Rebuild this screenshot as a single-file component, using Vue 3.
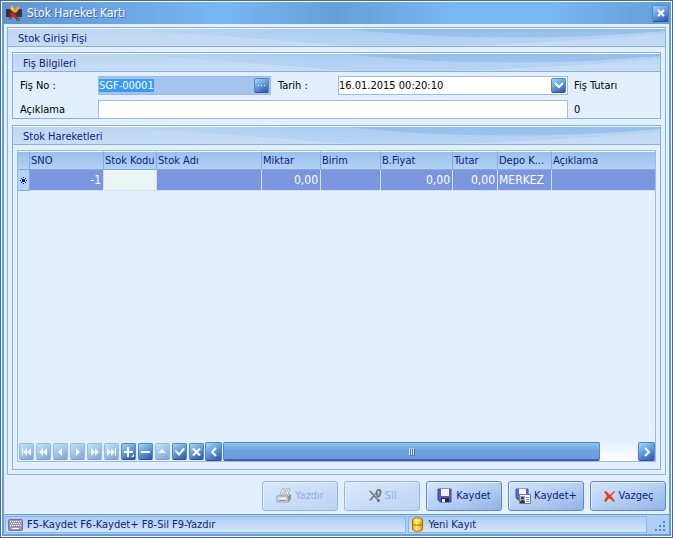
<script setup>
import { onMounted, ref } from 'vue'

const receiptNo = ref('SGF-00001')
const receiptDate = ref('16.01.2015 00:20:10')
const note = ref('')
const receiptInput = ref(null)

const columns = [
  { key: 'sno', title: 'SNO', width: 74, numeric: true },
  { key: 'code', title: 'Stok Kodu', width: 53 },
  { key: 'name', title: 'Stok Adı', width: 105 },
  { key: 'qty', title: 'Miktar', width: 59, numeric: true },
  { key: 'unit', title: 'Birim', width: 60 },
  { key: 'price', title: 'B.Fiyat', width: 72, numeric: true },
  { key: 'total', title: 'Tutar', width: 45, numeric: true },
  { key: 'store', title: 'Depo K...', width: 54 },
  { key: 'note', title: 'Açıklama' }
]

const rows = [
  { sno: '-1', code: '', name: '', qty: '0,00', unit: '', price: '0,00', total: '0,00', store: 'MERKEZ', note: '' }
]

const navButtons = [
  { label: 'İlk kayıt', off: true, d: 'M3 4h1v8H3zM8 4v8L4 8zM12 4v8L8 8z' },
  { label: 'Önceki sayfa', off: true, d: 'M7 4v8L3 8zM11 4v8L7 8z' },
  { label: 'Önceki', off: true, d: 'M9 4v8L5 8z' },
  { label: 'Sonraki', off: true, d: 'M6 4v8l4-4z' },
  { label: 'Sonraki sayfa', off: true, d: 'M4 4v8l4-4zM8 4v8l4-4z' },
  { label: 'Son kayıt', off: true, d: 'M3 4v8l4-4zM7 4v8l4-4zM11 4h1v8h-1z' },
  { label: 'Ekle', d: 'M6 3h2v4h4v2H8v4H6V9H3V7h3zM13 10v3h-3z' },
  { label: 'Çıkar', d: 'M3 7h9v2H3z' },
  { label: 'Düzenle', off: true, d: 'M3 9l4-4 4 4z' },
  { label: 'Onayla', d: 'M3 7l1-1 3 3 4-5 2 1-6 7z' },
  { label: 'İptal', d: 'M3 5l2-1 2.500 2.500L10 4l2 1-3 3 3 3-2 1-2.500-2.500L5 12l-2-1 3-3z' }
]

onMounted(() => {
  receiptInput.value.focus()
  receiptInput.value.select()
})
</script>

<template>
  <div class="window">
    <svg class="defs" aria-hidden="true">
      <defs>
        <linearGradient id="waveFill" x1="0" x2="1" y1="0" y2="0">
          <stop offset="0" stop-color="#bcd6f3" />
          <stop offset=".4" stop-color="#aaccf0" />
          <stop offset=".75" stop-color="#aaccf0" />
          <stop offset="1" stop-color="#b2d0f1" />
        </linearGradient>
        <linearGradient id="waveFade" x1="0" x2="0" y1="0" y2="1">
          <stop offset="0" stop-color="#c4dbf5" stop-opacity="0" />
          <stop offset="1" stop-color="#c4dbf5" stop-opacity=".6" />
        </linearGradient>
        <linearGradient id="waveDeep" x1="0" x2="0" y1="0" y2="1">
          <stop offset="0" stop-color="#93bdeb" />
          <stop offset="1" stop-color="#9fc5ee" />
        </linearGradient>
        <symbol id="wave" viewBox="0 0 658 18" preserveAspectRatio="none">
          <path d="M80 0C190 3 270 13 350 18H430C520 16 600 10 658 5V0z" fill="url(#waveFill)" />
          <path d="M80 0C190 3 270 13 350 18H430C520 16 600 10 658 5V0z" fill="url(#waveFade)" />
          <path d="M340 0C400 7 450 9 510 9S610 6 658 2V0z" fill="url(#waveDeep)" />
        </symbol>
        <linearGradient id="gold" x1="0" x2="1" y1="0" y2="0">
          <stop offset="0" stop-color="#f0a800" />
          <stop offset=".4" stop-color="#fff06a" />
          <stop offset="1" stop-color="#e89a00" />
        </linearGradient>
      </defs>
    </svg>

    <header class="titlebar">
      <svg class="app-icon" width="17" height="16" viewBox="0 0 17 16" aria-hidden="true">
        <path d="M0 4h5l3 3 3-3h5v8h-5l-2-2-3 2H0z" fill="#383538" />
        <path d="M4 1l2-1 3 5 3-4 2 2-4 5-3-1z" fill="#f3a62c" />
        <circle cx="6" cy="4" r="1.500" fill="#ffd34a" />
        <path d="M3 9l3-2 2 1 5 6-2 1-4-4-3 4-1-2 2-3z" fill="#c71f1b" />
        <path d="M10 13h1v3h-1zM12 13h2v1h-2zM12 15h2v1h-2z" fill="#475873" />
      </svg>
      <h1>Stok Hareket Kartı</h1>
      <button class="glossy close" type="button" aria-label="Kapat">
        <svg width="8" height="8" viewBox="0 0 8 8"><path d="M1 1l6 6M7 1L1 7" stroke="#fff" stroke-width="2" /></svg>
      </button>
    </header>

    <main class="body">
      <section class="panel outer">
        <h2 class="panel-head"><svg class="wave"><use href="#wave" /></svg><span>Stok Girişi Fişi</span></h2>
        <div class="outer-body">
          <section class="panel">
            <h3 class="panel-head"><svg class="wave"><use href="#wave" /></svg><span>Fiş Bilgileri</span></h3>
            <form class="form" @submit.prevent>
              <label for="no">Fiş No :</label>
              <div class="field active">
                <input id="no" ref="receiptInput" v-model="receiptNo" type="text" />
                <button class="glossy small" type="button" aria-label="Fiş seç">
                  <svg width="8" height="2" viewBox="0 0 8 2"><path d="M0 0h1v1H0zM3 0h1v1H3zM6 0h1v1H6z" fill="#fff" /></svg>
                </button>
              </div>
              <label for="date">Tarih :</label>
              <div class="field">
                <input id="date" v-model="receiptDate" type="text" />
                <button class="glossy small" type="button" aria-label="Takvimi aç">
                  <svg width="10" height="7" viewBox="0 0 10 7"><path d="M1 1l4 4 4-4" fill="none" stroke="#fff" stroke-width="2" /></svg>
                </button>
              </div>
              <span class="total">Fiş Tutarı</span>
              <label for="note">Açıklama</label>
              <div class="field wide"><input id="note" v-model="note" type="text" /></div>
              <output class="total">0</output>
            </form>
          </section>

          <section class="panel lines">
            <h3 class="panel-head"><svg class="wave"><use href="#wave" /></svg><span>Stok Hareketleri</span></h3>
            <div class="grid">
              <table>
                <colgroup>
                  <col width="12" />
                  <col v-for="c in columns" :key="c.key" :width="c.width" />
                </colgroup>
                <thead>
                  <tr>
                    <th></th>
                    <th v-for="c in columns" :key="c.key" scope="col">{{ c.title }}</th>
                  </tr>
                </thead>
                <tbody>
                  <tr v-for="r in rows" :key="r.sno">
                    <td class="marker">
                      <svg width="7" height="7" viewBox="0 0 7 7"><path d="M3 0h1v1H3zM1 1h1v1H1zM5 1h1v1H5zM2 2h1v1H2zM4 2h1v1H4zM0 3h1v1H0zM2 3h3v1H2zM6 3h1v1H6zM3 2h1v3H3zM2 4h1v1H2zM4 4h1v1H4zM1 5h1v1H1zM5 5h1v1H5zM3 6h1v1H3z" fill="#10207e" /></svg>
                    </td>
                    <td v-for="c in columns" :key="c.key" :class="{ numeric: c.numeric, editing: c.key === 'code' }">{{ r[c.key] }}</td>
                  </tr>
                </tbody>
              </table>
              <div class="navigator">
                <button v-for="b in navButtons" :key="b.label" class="glossy nav" type="button" :disabled="b.off" :aria-label="b.label">
                  <svg width="15" height="16" viewBox="0 0 15 16"><path :d="b.d" fill="#fff" /></svg>
                </button>
                <button class="glossy arrow" type="button" aria-label="Sola kaydır">
                  <svg width="8" height="10" viewBox="0 0 8 10"><path d="M6 1L2 5l4 4" fill="none" stroke="#fff" stroke-width="2" /></svg>
                </button>
                <div class="track">
                  <div class="thumb"><i></i><i></i><i></i></div>
                </div>
                <button class="glossy arrow" type="button" aria-label="Sağa kaydır">
                  <svg width="8" height="10" viewBox="0 0 8 10"><path d="M2 1l4 4-4 4" fill="none" stroke="#fff" stroke-width="2" /></svg>
                </button>
              </div>
            </div>
          </section>
        </div>
      </section>

      <div class="actions">
        <button class="action" type="button" disabled>
          <svg width="16" height="16" viewBox="0 0 16 16">
            <path d="M6 1h8l-2 6H4z" fill="#f2f3f5" stroke="#a9adb4" />
            <path d="M7 3h5M6 5h5" stroke="#a5aab2" />
            <path d="M12 8l3-2v5l-3 4z" fill="#8b9097" />
            <path d="M1 8l3-2h11l-3 2z" fill="#bfc3c8" />
            <path d="M1 8h11v6H1z" fill="#d3d6da" stroke="#9a9fa6" />
            <path d="M3 10h7v1H3z" fill="#f7f8f9" />
            <path d="M3 12h7v1H3z" fill="#8b9097" />
          </svg>
          <span>Yazdır</span>
        </button>
        <button class="action" type="button" disabled>
          <svg width="14" height="14" viewBox="0 0 14 14">
            <path d="M1 2l2 0 7 8-1 1z" fill="#6b7078" />
            <path d="M8 3l1 1-6 8-2-1z" fill="#80858d" />
            <path d="M9 1c1-1 4-1 4 1 0 3-1 5-2 6H9c0-2-1-5 0-7z" fill="#8a9098" stroke="#666c75" />
            <path d="M10 2h1v3h-1z" fill="#d5d8dc" />
            <circle cx="10.500" cy="11.500" r="1.500" fill="#666c75" />
          </svg>
          <span>Sil</span>
        </button>
        <button class="action" type="button">
          <svg width="16" height="16" viewBox="0 0 16 16">
            <path d="M1 1h13v13H3l-2-2z" fill="#5b5abb" stroke="#45449c" />
            <path d="M4 1h8v7H4z" fill="#f2f4ff" />
            <path d="M4 10h8v4H4z" fill="#25253e" />
            <path d="M5 11h3v3H5z" fill="#e8eaf4" />
          </svg>
          <span>Kaydet</span>
        </button>
        <button class="action" type="button">
          <svg width="16" height="16" viewBox="0 0 16 16">
            <path d="M1 1h12v11H3l-2-2z" fill="#6766c4" stroke="#5453ae" />
            <path d="M4 1h7v5H4z" fill="#f2f4ff" />
            <path d="M4.500 6.500h11v9h-11z" fill="#f8fafc" stroke="#6d7e91" />
            <path d="M5 8h5v7H5z" fill="#a9bccb" />
            <circle cx="7.500" cy="10" r="1.500" fill="#30343c" />
            <path d="M5 15c0-4 5-4 5 0z" fill="#30343c" />
            <path d="M11 9.500h3M11 11.500h3M11 13.500h3" stroke="#6a95bd" />
          </svg>
          <span>Kaydet+</span>
        </button>
        <button class="action" type="button">
          <svg width="13" height="13" viewBox="0 0 13 13">
            <path d="M1 2l2-1 4 4 4-4 1 1-4 4 4 5-1 1-5-4-3 4-2-1 3-5z" fill="#f13a12" />
          </svg>
          <span>Vazgeç</span>
        </button>
      </div>
    </main>

    <footer class="status">
      <div class="cell keys">
        <svg width="15" height="12" viewBox="0 0 15 12">
          <rect x=".5" y=".5" width="14" height="11" rx="1" fill="#9b96bf" stroke="#716d9b" />
          <path d="M2 2.500h11M3 4.500h10M2 6.500h11" stroke="#fff" stroke-dasharray="1 1" />
          <path d="M4 9.500h7" stroke="#fff" />
        </svg>
        <span>F5-Kaydet F6-Kaydet+ F8-Sil F9-Yazdır</span>
      </div>
      <div class="cell state">
        <svg width="11" height="15" viewBox="0 0 11 15">
          <path d="M.5 3c0-3 10-3 10 0v9c0 3-10 3-10 0z" fill="url(#gold)" stroke="#a76d06" />
          <path d="M1 7.500c2 1 7 1 9 0" fill="none" stroke="#a76d06" />
          <path d="M2 3c2 1 5 1 7 0" fill="none" stroke="#fff6a0" />
        </svg>
        <span>Yeni Kayıt</span>
      </div>
      <svg class="grip" width="10" height="10" viewBox="0 0 10 10"><path d="M8 0h2v2H8zM4 4h2v2H4zM8 4h2v2H8zM0 8h2v2H0zM4 8h2v2H4zM8 8h2v2H8z" fill="#4d86c8" /></svg>
    </footer>
  </div>
</template>

<style>
body {
  margin: 0;
}
</style>

<style scoped>
* {
  box-sizing: border-box;
}
.window {
  display: flex;
  flex-direction: column;
  min-height: 100vh;
  padding: 1px;
  border: 1px solid #4468ae;
  background: #fff;
  color: #10207e;
  font: 11px/14px Tahoma, "DejaVu Sans Condensed", "DejaVu Sans", sans-serif;
}
.defs {
  position: absolute;
  width: 0;
  height: 0;
}
button,
input {
  margin: 0;
  padding: 0;
  font: inherit;
}
svg {
  display: block;
  flex: none;
}
h1,
h2,
h3 {
  margin: 0;
  font: inherit;
}
.titlebar {
  display: flex;
  align-items: center;
  height: 22px;
  padding: 0 2px 0 4px;
  background: linear-gradient(90deg, #5f95d2, #78b6f4 33%, #669fd8 50%, #78b6f4 67%, #78b6f4 82%, #659dd8);
}
.titlebar h1 {
  flex: 1;
  padding-left: 4px;
  color: #fff;
  font-size: 12px;
  text-shadow: 1px 1px 0 #3e62a5;
}
.glossy {
  display: flex;
  align-items: center;
  justify-content: center;
  border: 1px solid #5286c8;
  border-bottom-color: #2f4f9f;
  border-radius: 2px;
  background: linear-gradient(150deg, #a5d6f5, #69a7e0 40%, #4a73c0 75%, #3553a5);
}
.close {
  width: 17px;
  height: 17px;
}
.body {
  flex: 1;
  display: flex;
  flex-direction: column;
  padding: 3px;
  border: solid #659fdb;
  border-width: 0 2px;
  background: #e2f0fe;
}
.panel {
  border: 1px solid #8ab0e2;
}
.outer {
  flex: 1;
  display: flex;
  flex-direction: column;
}
.panel-head {
  position: relative;
  height: 19px;
  padding-left: 10px;
  border-top: 1px solid #f3f9ff;
  border-bottom: 1px solid #8ab0e2;
  background: linear-gradient(#bdd6f3, #c7ddf5);
  line-height: 19px;
}
.panel-head span {
  position: relative;
}
.wave {
  position: absolute;
  inset: 0;
  width: 100%;
  height: 100%;
}
.outer-body {
  flex: 1;
  display: flex;
  flex-direction: column;
  gap: 6px;
  padding: 5px 4px 4px;
}
.form {
  display: grid;
  grid-template-columns: 78px 173px 67px 1fr 92px;
  row-gap: 5px;
  align-items: center;
  margin-bottom: -1px;
  padding: 4px 0 0 7px;
  color: #000;
}
.form label[for="date"] {
  padding-left: 7px;
}
.field {
  display: flex;
  align-items: center;
  height: 19px;
  padding-right: 1px;
  border: 1px solid #9abce8;
  background: #fff;
}
.field.active {
  background: #a5c3ec;
}
.field.wide {
  grid-column: span 3;
}
.field input {
  flex: 1;
  min-width: 0;
  height: 16px;
  border: 0;
  outline: 0;
  background: transparent;
  color: #000;
}
.field input::selection {
  background: rgba(51, 153, 255, 0.99);
  color: #fff;
}
.small {
  width: 15px;
  height: 15px;
}
.total {
  padding-left: 6px;
}
.lines {
  flex: 1;
  display: flex;
  flex-direction: column;
}
.grid {
  flex: 1;
  display: flex;
  flex-direction: column;
  margin: 5px 4px 7px;
  border: 1px solid #9abce8;
}
table {
  width: 100%;
  border-collapse: separate;
  border-spacing: 0;
  table-layout: fixed;
}
th {
  height: 19px;
  padding: 0 0 0 1px;
  border-top: 1px solid #f3f9ff;
  border-right: 1px solid #82abe0;
  border-bottom: 1px solid #82abe0;
  background: linear-gradient(#98c0ed, #b4d2f2);
  font-weight: normal;
  text-align: left;
  white-space: nowrap;
}
td {
  height: 21px;
  padding: 0 2px 0 1px;
  border-right: 1px solid #cfe0f7;
  border-bottom: 1px solid #cfe0f7;
  background: #7b96df;
  color: #fff;
  font-size: 12px;
  white-space: nowrap;
}
th:last-child,
td:last-child {
  border-right: 0;
}
.numeric {
  text-align: right;
}
.editing {
  background: #e8f5f4;
}
.marker {
  padding: 0 2px;
  border-color: #82abe0;
  background: #b4d2f2;
}
.navigator {
  display: flex;
  align-items: center;
  gap: 2px;
  margin-top: auto;
  padding-left: 1px;
}
.nav {
  width: 15px;
  height: 17px;
}
.nav:disabled {
  opacity: 0.5;
}
.arrow {
  width: 17px;
  height: 19px;
}
.nav + .arrow {
  margin-left: -1px;
}
.track {
  flex: 1;
  height: 19px;
  margin: 0 -1px;
  background: linear-gradient(#e2f0fe, #fff);
}
.thumb {
  display: flex;
  align-items: center;
  justify-content: center;
  gap: 1px;
  width: 91%;
  height: 19px;
  border: 1px solid #5286c8;
  border-bottom: 2px solid #3f5fae;
  border-radius: 2px;
  background: linear-gradient(#8fc4ee, #6fa4e0 45%, #6f9bdb);
}
.thumb i {
  width: 1px;
  height: 7px;
  background: #dcecff;
  box-shadow: 1px 1px 0 #4d71b8;
}
.actions {
  display: flex;
  flex-wrap: wrap;
  justify-content: flex-end;
  gap: 6px;
  padding: 6px 0 0;
}
.action {
  display: flex;
  align-items: center;
  justify-content: center;
  gap: 3px;
  width: 76px;
  height: 30px;
  border: 1px solid #6286ca;
  border-radius: 3px;
  background: linear-gradient(160deg, #d3e6fa, #b5d0f3 50%, #92b2e5);
  box-shadow: inset 1px 1px 0 #e2effd;
  color: #10207e;
}
.action:disabled {
  border-color: #9ab4e0;
  background: linear-gradient(160deg, #dcebfb, #c9def7 50%, #bcd3f3);
  color: #93aee0;
}
.status {
  display: flex;
  gap: 2px;
  padding: 1px 2px 1px 1px;
  border: solid #659fdb;
  border-width: 1px 2px 2px;
  background: #b0cef1;
}
.cell {
  display: flex;
  align-items: center;
  gap: 4px;
  height: 17px;
  padding-left: 2px;
  border: 1px solid #8fb5e4;
  background: linear-gradient(#acccf0, #d5e6f9);
}
.keys {
  flex: 405;
}
.state {
  flex: 238;
  gap: 5px;
  padding-left: 3px;
}
.grip {
  align-self: flex-end;
  margin: 0 2px 2px 6px;
}
</style>
